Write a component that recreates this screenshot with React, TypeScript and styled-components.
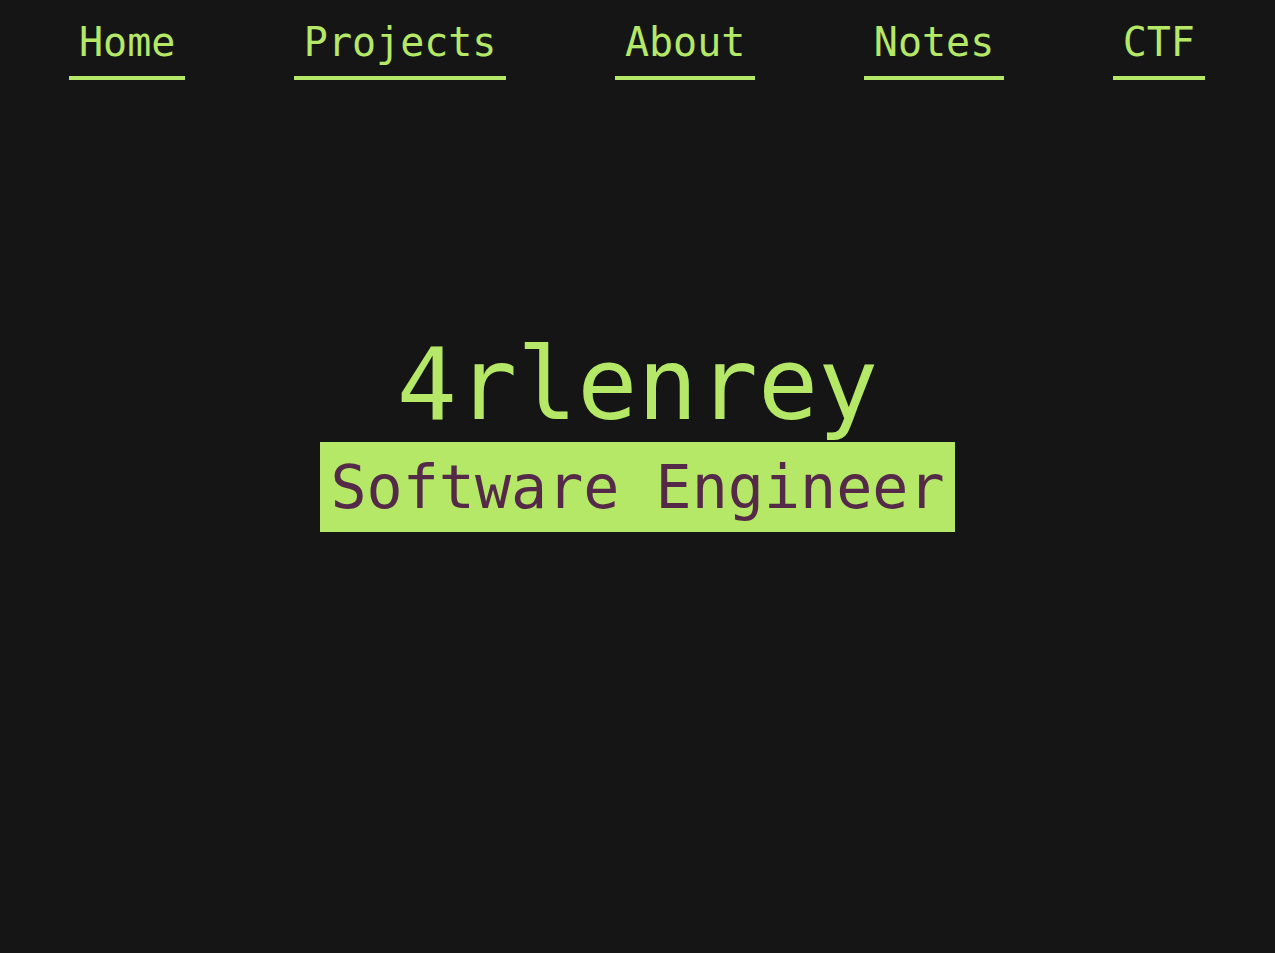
import React from "react";
import styled, { createGlobalStyle } from "styled-components";

const color = {
  bg: "#151515",
  main: "#b4e866",
  dark: "#552a48",
};

const GlobalStyle = createGlobalStyle`
  html, body {
    margin: 0;
    padding: 0;
    background: ${color.bg};
  }
  body {
    min-height: 953px;
    font-family: "DejaVu Sans Mono", "Liberation Mono", monospace;
  }
`;

const Page = styled.div`
  display: flex;
  flex-direction: column;
  min-height: 953px;
  background: ${color.bg};
`;

const Nav = styled.nav`
  display: flex;
  justify-content: space-between;
  align-items: flex-end;
  padding: 19px 70px 0 69px;
`;

const NavLink = styled.a`
  display: block;
  padding: 0 10px 11px;
  border-bottom: 4px solid ${color.main};
  color: ${color.main};
  font-size: 40px;
  line-height: normal;
  text-decoration: none;
  cursor: pointer;
`;

const Hero = styled.main`
  display: flex;
  flex-direction: column;
  align-items: center;
  padding-top: 250px;
`;

const Title = styled.h1`
  margin: 0 0 2px;
  font-size: 100px;
  font-weight: normal;
  line-height: 1.1;
  color: ${color.main};
`;

const Subtitle = styled.h2`
  margin: 0;
  padding: 10px;
  font-size: 60px;
  font-weight: normal;
  line-height: normal;
  color: ${color.dark};
  background: ${color.main};
`;

const links = ["Home", "Projects", "About", "Notes", "CTF"];

function App() {
  return (
    <Page>
      <GlobalStyle />
      <Nav>
        {links.map((l) => (
          <NavLink key={l}>{l}</NavLink>
        ))}
      </Nav>
      <Hero>
        <Title>4rlenrey</Title>
        <Subtitle>Software Engineer</Subtitle>
      </Hero>
    </Page>
  );
}

export default App;
